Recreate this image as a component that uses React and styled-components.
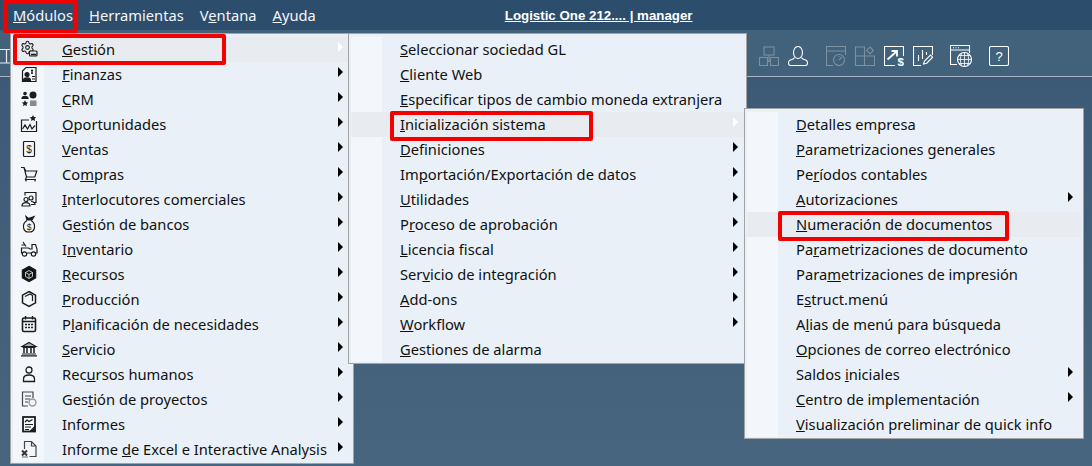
import React from "react";
import styled, { createGlobalStyle } from "styled-components";
import { Settings } from "lucide-react";

const Global = createGlobalStyle`
  html, body { margin: 0; padding: 0; }
  body { width: 1092px; height: 466px; overflow: hidden; font-family: "Noto Sans", sans-serif; }
`;

const Stage = styled.div`
  position: relative;
  width: 1092px;
  height: 466px;
  overflow: hidden;
  display: flex;
  flex-direction: column;
  background: linear-gradient(#3a5874, #48657f);
`;
const MenuBar = styled.div`
  height: 30px;
  flex: none;
  display: flex;
  align-items: center;
  padding-left: 13px;
  gap: 16px;
  background: #2d4d6d;
  font-size: 14.7px;
  color: #f4f7fa;
`;
const BarItem = styled.span`
  line-height: 30px;
`;
const Title = styled.a`
  margin-left: 173px;
  font: bold 13.3px "Liberation Sans", sans-serif;
  color: #fff;
  text-decoration: underline;
`;
const Toolbar = styled.div`
  height: 47px;
  flex: none;
  box-sizing: border-box;
  display: flex;
  align-items: center;
  padding: 6px 83px 0 0;
  background: #42617b;
  border-bottom: 1px solid #a8b6c2;
`;
const Sliver = styled.svg`
  width: 10px;
  height: 20px;
  margin-right: auto;
  fill: none;
  stroke: #e8edf2;
  stroke-width: 1.2;
`;
const ToolIcon = styled.svg`
  width: ${(p) => p.$size || 20}px;
  height: ${(p) => p.$size || 20}px;
  margin-left: ${(p) => p.$gap}px;
  fill: none;
  stroke: ${(p) => (p.$off ? "#7d90a2" : "#ffffff")};
  stroke-width: 1.1;
`;
const Menu = styled.div`
  position: absolute;
  left: ${(p) => p.$x}px;
  top: ${(p) => p.$y}px;
  width: ${(p) => p.$w}px;
  box-sizing: border-box;
  padding: 3px 2px 1px;
  background: #e9f0f8;
  border: 1px solid #a3a3a3;
  color: #101010;
`;
const Row = styled.div`
  height: 25px;
  display: flex;
  align-items: center;
  background: ${(p) => (p.$active ? "#e8ecf0" : "transparent")};
  font-size: 14.7px;
  white-space: nowrap;
`;
const IconCell = styled.div`
  width: 31px;
  height: 25px;
  flex: none;
  margin-right: 18px;
  display: flex;
  align-items: center;
  justify-content: center;
  padding-bottom: 1px;
  box-sizing: border-box;
  background: ${(p) => (p.$active ? "transparent" : "#f3f7fb")};
`;
const Label = styled.span`
  flex: 1;
  padding-bottom: 2px;
`;
const Arrow = styled.i`
  width: 0;
  height: 0;
  margin: 0 ${(p) => p.$right}px 6px 0;
  border-left: 5px solid ${(p) => (p.$active ? "#fff" : "#000")};
  border-top: 5px solid transparent;
  border-bottom: 5px solid transparent;
`;
const Mark = styled.div`
  position: absolute;
  left: ${(p) => p.$x}px;
  top: ${(p) => p.$y}px;
  width: ${(p) => p.$w}px;
  height: ${(p) => p.$h}px;
  box-sizing: border-box;
  border: 4px solid #f30000;
  border-radius: 2px;
  pointer-events: none;
`;
const MenuGlyph = styled.svg`
  width: 18px;
  height: 18px;
  fill: none;
  stroke: #1c1c1c;
  stroke-width: 1.2;
`;

// "&" marks the letter that gets the keyboard underline
function Mnemonic({ text }) {
  const i = text.indexOf("&");
  if (i < 0) return text;
  return (
    <>
      {text.slice(0, i)}
      <u>{text[i + 1]}</u>
      {text.slice(i + 2)}
    </>
  );
}

const ink = "#1c1c1c";
const glyphs = [
  // gestion
  <>
    <Settings x={0} y={0} size={15} strokeWidth={1.7} color={ink} />
    <rect x="9.500" y="11" width="7.500" height="5" rx="1" fill="#e8ecf0" />
    <path d="M11 14.500h5" strokeWidth="1.600" />
  </>,
  // finanzas
  <>
    <path d="M6 2.500h10v14H2.500V6z" />
    <circle cx="7" cy="9.500" r="2" fill={ink} />
    <path d="M3.500 15.500c0-3.500 7-3.500 7 0z" fill={ink} />
    <path d="M12 4.500v4.500M11 5.500h2M11 8h2M12 11.500h3M12 14h3" />
  </>,
  // crm
  <>
    <circle cx="5" cy="3.500" r="1.800" fill={ink} stroke="none" />
    <path d="M2 8.500c0-3 6-3 6 0z" fill={ink} />
    <circle cx="13" cy="5" r="3.500" fill={ink} stroke="none" />
    <path d="M5 10l1 2.200 2.200.2-1.700 1.500.5 2.300L5 15l-2 1.200.5-2.300-1.700-1.500 2.200-.2z" fill={ink} stroke="none" />
    <rect x="10" y="10.500" width="6.500" height="5.500" fill="#8a8a8a" stroke="none" />
  </>,
  // oportunidades
  <>
    <path d="M9 5H1.500v11.500h15V6" />
    <path d="M2.500 14l2.500-4 2.500 4 2.500-4.500 2 4.500 3-3.500" />
    <path d="M13 0l1 2 2.200.3-1.600 1.500.4 2.200-2-1-2 1 .4-2-1.600-1.700 2.200-.3z" fill={ink} stroke="none" />
  </>,
  // ventas
  <>
    <rect x="3.500" y="1.500" width="11" height="15" rx="1" />
    <text x="9" y="13" fontSize="10" textAnchor="middle" fill={ink} stroke="none" fontFamily="Liberation Sans">$</text>
  </>,
  // compras
  <path d="M1 2.500h3l1.800 3.500h11l-2 6H6.500L4 2.500M6.500 12l-1 2.500h10.500M6 15v1.500M15 15v1.500" />,
  // interlocutores
  <>
    <path d="M5 5.500V2.500h11v10h-3" />
    <circle cx="6" cy="9.500" r="2" />
    <circle cx="11" cy="8" r="2" />
    <path d="M2 16c0-4.500 8-4.500 8 0zM11 11.500c2.500 0 4 1 4 3h-4" />
  </>,
  // gestion de bancos
  <>
    <path d="M6 1.500l2.500 2 5.500-2-2 3.500H7z" fill={ink} />
    <path d="M7 5.500c-5.500 3.500-4.500 11.500 2 11.500s7.500-8 2-11.500" />
    <text x="9" y="14.800" fontSize="8.500" textAnchor="middle" fill={ink} stroke="none" fontFamily="Liberation Sans">$</text>
  </>,
  // inventario
  <>
    <path d="M3 2l3 4.500M1.500 5h3" />
    <path d="M2 13h-.5V8h7l1.500 1h2V4.500h3.500L17 9v4h-1M7 13h4" />
    <circle cx="4.500" cy="14" r="2.200" />
    <circle cx="13.500" cy="14" r="2.200" />
  </>,
  // recursos
  <>
    <path d="M9 1.500l6.500 3.700v7.600L9 16.500l-6.500-3.700V5.200z" fill="#111" strokeWidth="1.500" />
    <path d="M9 5.500l3.500 2v4L9 13.500l-3.500-2v-4zM9 9.500v4M9 9.500l3.500-2M9 9.500l-3.500-2" stroke="#e9f0f8" strokeWidth=".8" />
  </>,
  // produccion
  <>
    <path d="M9 1.500l6.500 3.700v7.600L9 16.500l-6.500-3.700V5.200z" strokeWidth="1.500" />
    <path d="M5 6.500l5-2.500 2.500 1.500V11" />
  </>,
  // planificacion
  <>
    <rect x="2.500" y="3" width="13" height="13.500" rx="1.500" strokeWidth="1.600" />
    <path d="M5.500 1v3.500M12.500 1v3.500M2.500 6.500h13" strokeWidth="1.400" />
    <path d="M5 9.500h2M8 9.500h2M11 9.500h2M5 12.500h2M8 12.500h2M11 12.500h2" strokeWidth="1.600" />
  </>,
  // servicio
  <>
    <path d="M9 2.500L16 6.500H2z" fill={ink} fillOpacity=".35" />
    <path d="M4 8v5M7 8v5M11 8v5M14 8v5" strokeWidth="1.500" />
    <path d="M2.500 7.500h13M2 14h14M1 15.800h16" />
  </>,
  // recursos humanos
  <>
    <circle cx="9" cy="5" r="3" strokeWidth="1.300" />
    <path d="M3.500 16.500v-2.500c0-2.800 2.500-4 5.500-4s5.500 1.200 5.500 4v2.500z" strokeWidth="1.300" />
  </>,
  // gestion de proyectos
  <>
    <path d="M13 8V2H2.500v14H8" stroke="#444" />
    <path d="M5 6h6M5 9h5M5 12h3" stroke="#444" />
    <circle cx="12.500" cy="12.500" r="3.500" stroke="#999" strokeWidth="1.400" />
  </>,
  // informes
  <>
    <rect x="3" y="2" width="12" height="14.500" strokeWidth="1.800" />
    <path d="M5 7l2-2 2 1.500 3.500-2M5 9.500h8M5 12h6M5 14.500h4" />
    <path d="M10 16.500l5-5v5z" fill={ink} />
  </>,
  // informe excel
  <>
    <path d="M4.500 9V1.500h7l4.500 4.500v10.500H9.500M11.500 1.500v4.500h4.500" stroke="#444" />
    <path d="M2 10.500l5 5M7 10.500l-5 5" strokeWidth="2" stroke="#333" />
    <path d="M8 17H2" stroke="#999" strokeWidth="1.500" />
  </>,
];

const modules = [
  ["&Gestión", true, true],
  ["&Finanzas", true],
  ["&CRM", true],
  ["&Oportunidades", true],
  ["&Ventas", true],
  ["Co&mpras", true],
  ["&Interlocutores comerciales", true],
  ["G&estión de bancos", true],
  ["I&nventario", true],
  ["&Recursos", true],
  ["&Producción", true],
  ["P&lanificación de necesidades", true],
  ["&Servicio", true],
  ["Rec&ursos humanos", true],
  ["Ges&tión de proyectos", true],
  ["Informes", true],
  ["Informe &de Excel e Interactive Analysis", true],
];

const gestion = [
  ["&Seleccionar sociedad GL"],
  ["&Cliente Web"],
  ["&Especificar tipos de cambio moneda extranjera"],
  ["&Inicialización sistema", true, true],
  ["&Definiciones", true],
  ["Im&portación/Exportación de datos", true],
  ["&Utilidades", true],
  ["P&roceso de aprobación", true],
  ["&Licencia fiscal", true],
  ["Ser&vicio de integración", true],
  ["&Add-ons", true],
  ["&Workflow", true],
  ["&Gestiones de alarma"],
];

const sistema = [
  ["&Detalles empresa"],
  ["&Parametrizaciones generales"],
  ["Pe&ríodos contables"],
  ["&Autorizaciones", true],
  ["&Numeración de documentos", false, true],
  ["Pa&rametrizaciones de documento"],
  ["Para&metrizaciones de impresión"],
  ["E&struct.menú"],
  ["A&lias de menú para búsqueda"],
  ["&Opciones de correo electrónico"],
  ["Saldos &iniciales", true],
  ["&Centro de implementación", true],
  ["&Visualización preliminar de quick info"],
];

function MenuPanel({ x, y, w, items, withIcons, arrowRight = 8 }) {
  return (
    <Menu $x={x} $y={y} $w={w}>
      {items.map(([text, sub, active], i) => (
        <Row key={text} $active={active}>
          <IconCell $active={active}>
            {withIcons && <MenuGlyph viewBox="0 0 18 18">{glyphs[i]}</MenuGlyph>}
          </IconCell>
          <Label>
            <Mnemonic text={text} />
          </Label>
          {sub && <Arrow $active={active} $right={arrowRight} />}
        </Row>
      ))}
    </Menu>
  );
}

export default function App() {
  return (
    <Stage>
      <Global />
      <MenuBar>
        <BarItem><Mnemonic text="&Módulos" /></BarItem>
        <BarItem><Mnemonic text="&Herramientas" /></BarItem>
        <BarItem><Mnemonic text="V&entana" /></BarItem>
        <BarItem><Mnemonic text="&Ayuda" /></BarItem>
        <Title>Logistic One 212.... | manager</Title>
      </MenuBar>
      <Toolbar>
        <Sliver viewBox="0 0 10 20"><path d="M0 3.500h10M0 17h10M6.500 3.500V17" /></Sliver>
        <ToolIcon $off $gap={0} viewBox="0 0 20 20"><rect x="5" y="1" width="10" height="8" /><rect x=".5" y="11.500" width="8" height="8" /><rect x="11.500" y="11.500" width="8" height="8" /><path d="M8.500 15.500h3M10 9v6" /></ToolIcon>
        <ToolIcon $gap={9} viewBox="0 0 20 20"><ellipse cx="10" cy="6.500" rx="4.500" ry="6" /><path d="M6.500 11.500c-1 2.500-3 1.500-5 3-1 .8-1 1.500-1 2.500 0 1.500.5 2.500 2 2.500h15c1.500 0 2-1 2-2.500 0-1 0-1.700-1-2.500-2-1.500-4-.5-5-3" /></ToolIcon>
        <ToolIcon $off $gap={18} viewBox="0 0 20 20"><path d="M7 19.500H.5V.500h19V9M.5 5h19" /><circle cx="13" cy="14" r="5.500" /><path d="M13 14l3-3M9.500 14h1M13 10v1" /></ToolIcon>
        <ToolIcon $off $gap={9} viewBox="0 0 20 20"><path d="M.5 1h9v18.500h-9zM9.500 10h10v9.500h-10zM.5 10h9" /><path d="M15 1l3.500 3.500L15 8l-3.500-3.500z" /></ToolIcon>
        <ToolIcon $gap={9} viewBox="0 0 20 20"><path d="M11 19.500H.5V.500h19V10" /><path d="M3.500 13.500L12 6M7.500 5H13v5.500" strokeWidth="1.800" /><text x="13.500" y="19.500" fontSize="11.500" fontWeight="bold" fill="#fff" stroke="none" fontFamily="Liberation Sans">$</text></ToolIcon>
        <ToolIcon $gap={9} viewBox="0 0 20 20"><path d="M8 19.500H.5V.500h19V9" /><path d="M5.500 9v6M9.500 4v9M13.500 6v3" /><path d="M10.500 18l1-3 6-6 2.200 2.200-6 6z" /></ToolIcon>
        <ToolIcon $size={22} $gap={17} viewBox="0 0 22 22"><path d="M7 19.500H.5V.500h19V8M.5 5h19M3 2.800h1M5.500 2.800h1M8 2.800h1" /><circle cx="14.500" cy="14.500" r="7" /><path d="M7.500 14.500h14M14.500 7.500v14M9 10.500h11M9 18.500h11M11.500 8.500c-1.500 4-1.500 8 0 12M17.500 8.500c1.500 4 1.500 8 0 12" strokeWidth=".8" /></ToolIcon>
        <ToolIcon $gap={17} viewBox="0 0 20 20"><rect x=".5" y=".5" width="19" height="19" rx="1.500" /><text x="10" y="15" fontSize="13" textAnchor="middle" fill="#fff" stroke="none" fontFamily="Liberation Sans">?</text></ToolIcon>
      </Toolbar>
      <MenuPanel x={10} y={33} w={344} items={modules} withIcons />
      <MenuPanel x={348} y={33} w={399} items={gestion} arrowRight={6} />
      <MenuPanel x={744} y={108} w={340} items={sistema} />
      <Mark $x={3} $y={0} $w={75} $h={33} />
      <Mark $x={13} $y={34} $w={213} $h={31} />
      <Mark $x={390} $y={111} $w={203} $h={30} />
      <Mark $x={778} $y={211} $w={231} $h={30} />
    </Stage>
  );
}
